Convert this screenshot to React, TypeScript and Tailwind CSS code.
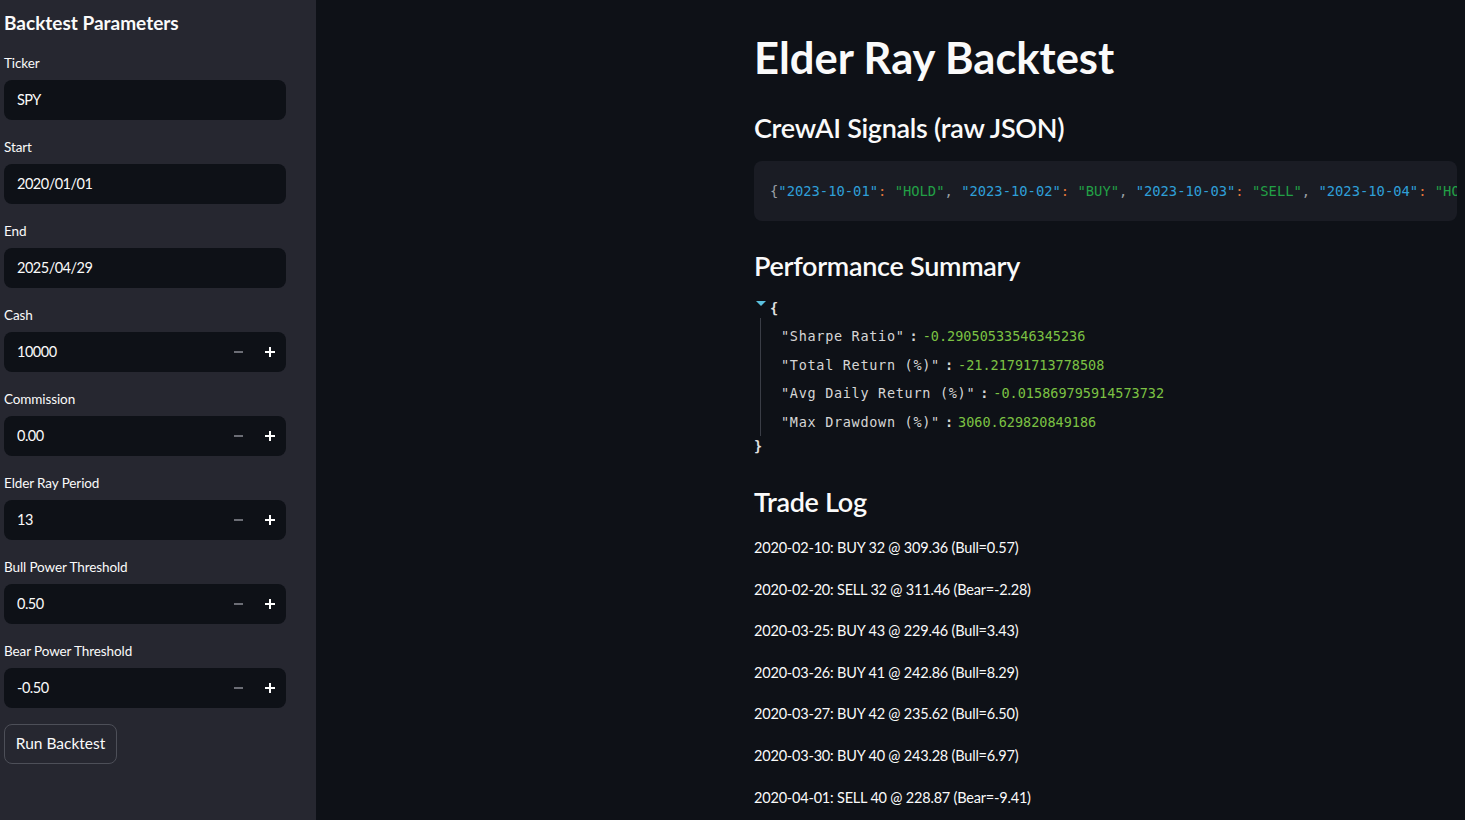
import React from "react";

const sans = { fontFamily: '"Source Sans Pro", Lato, "Noto Sans", sans-serif' };
const mono = { fontFamily: '"DejaVu Sans Mono", "Liberation Mono", monospace' };

function Label({ text }: { text: string }) {
  return <div className="h-[26px] text-[13.5px] leading-[26px] tracking-[-0.1px] text-[#fafafa]">{text}</div>;
}

function TextField({ label, value }: { label: string; value: string }) {
  return (
    <div className="flex flex-col">
      <Label text={label} />
      <div className="mt-[4px] flex h-[40px] items-center rounded-[8px] bg-[#0e1117] px-[13px] text-[14.5px] tracking-[-0.5px] text-[#fafafa]">
        {value}
      </div>
    </div>
  );
}

function NumberField({ label, value }: { label: string; value: string }) {
  return (
    <div className="flex flex-col">
      <Label text={label} />
      <div className="mt-[4px] flex h-[40px] items-center rounded-[8px] bg-[#0e1117] pl-[13px] text-[14.5px] tracking-[-0.5px] text-[#fafafa]">
        <span className="flex-1">{value}</span>
        <span className="flex h-full w-[32px] items-center justify-center">
          <span className="block h-[2px] w-[9px] bg-[#6b6d75]"></span>
        </span>
        <span className="relative flex h-full w-[32px] items-center justify-center">
          <span className="block h-[2px] w-[10px] bg-white"></span>
          <span className="absolute block h-[10px] w-[2px] bg-white"></span>
        </span>
      </div>
    </div>
  );
}

const trades = [
  "2020-02-10: BUY 32 @ 309.36 (Bull=0.57)",
  "2020-02-20: SELL 32 @ 311.46 (Bear=-2.28)",
  "2020-03-25: BUY 43 @ 229.46 (Bull=3.43)",
  "2020-03-26: BUY 41 @ 242.86 (Bull=8.29)",
  "2020-03-27: BUY 42 @ 235.62 (Bull=6.50)",
  "2020-03-30: BUY 40 @ 243.28 (Bull=6.97)",
  "2020-04-01: SELL 40 @ 228.87 (Bear=-9.41)",
];

const perf: [string, string][] = [
  ["Sharpe Ratio", "-0.29050533546345236"],
  ["Total Return (%)", "-21.21791713778508"],
  ["Avg Daily Return (%)", "-0.015869795914573732"],
  ["Max Drawdown (%)", "3060.629820849186"],
];

const signals: [string, string][] = [
  ["2023-10-01", "HOLD"],
  ["2023-10-02", "BUY"],
  ["2023-10-03", "SELL"],
  ["2023-10-04", "HOLD"],
  ["2023-10-05", "BUY"],
];

export default function App() {
  return (
    <div className="flex h-[820px] w-[1465px] overflow-hidden bg-[#0e1117] text-[#fafafa]" style={sans}>
      {/* Sidebar */}
      <aside className="flex h-full w-[316px] shrink-0 flex-col bg-[#262730] pl-[4px] pr-[30px]">
        <h2 className="mt-[9px] text-[19px] font-bold leading-[28px] text-[#fafafa]">Backtest Parameters</h2>
        <div className="mt-[13px] flex flex-col gap-[14px]">
          <TextField label="Ticker" value="SPY" />
          <TextField label="Start" value="2020/01/01" />
          <TextField label="End" value="2025/04/29" />
          <NumberField label="Cash" value="10000" />
          <NumberField label="Commission" value="0.00" />
          <NumberField label="Elder Ray Period" value="13" />
          <NumberField label="Bull Power Threshold" value="0.50" />
          <NumberField label="Bear Power Threshold" value="-0.50" />
        </div>
        <div className="mt-[16px]">
          <button className="h-[40px] w-[113px] rounded-[8px] border border-[#4d4f58] text-[15.5px] text-[#fafafa]">
            Run Backtest
          </button>
        </div>
      </aside>

      {/* Main */}
      <main className="min-w-0 flex-1 pl-[438px] pr-[8px]">
        <h1 className="mt-[30px] text-[43.5px] font-bold leading-[54px]">Elder Ray Backtest</h1>
        <h3 className="mt-[26px] text-[27px] font-semibold leading-[36px] tracking-[-0.3px]">CrewAI Signals (raw JSON)</h3>
        <div className="mt-[15px] flex h-[60px] items-center overflow-hidden rounded-[8px] bg-[#1a1c24] px-[16px]">
          <pre className="whitespace-pre text-[13.8px] text-[#9aa0a6]" style={mono}>
            {"{"}
            {signals.map(([d, s], i) => (
              <React.Fragment key={d}>
                <span className="text-[#2f9fd8]">"{d}"</span>
                <span className="text-[#e2753a]">: </span>
                <span className="text-[#22a046]">"{s}"</span>
                {i < signals.length - 1 ? ", " : ""}
              </React.Fragment>
            ))}
            {"}"}
          </pre>
        </div>

        <h3 className="mt-[27px] text-[27px] font-semibold leading-[36px] tracking-[-0.3px]">Performance Summary</h3>
        <div className="mt-[14px] text-[13.5px]" style={mono}>
          <div className="flex h-[20px] items-center">
            <svg width="12" height="10" viewBox="0 0 12 10" className="ml-[1px] mt-[-8px]">
              <path d="M1 2 L11 2 L6 7 Z" fill="#5bc0de" />
            </svg>
            <span className="ml-[3px] font-bold text-[#e0e0e0]">{"{"}</span>
          </div>
          <div className="ml-[6px] border-l border-[#3a3d46] pl-[20px] pt-[4px]">
            {perf.map(([k, v]) => (
              <div key={k} className="flex h-[28.5px] items-center whitespace-pre">
                <span className="tracking-[0.7px] text-[#d6d6d6]">"{k}"</span>
                <span className="mx-[5px] font-bold text-[#d6d6d6]">:</span>
                <span className="text-[#7cc243]">{v}</span>
              </div>
            ))}
          </div>
          <div className="h-[20px] font-bold leading-[20px] text-[#e0e0e0]">{"}"}</div>
        </div>

        <h3 className="mt-[28px] text-[27px] font-semibold leading-[36px] tracking-[-0.3px]">Trade Log</h3>
        <div className="mt-[16px] flex flex-col gap-[17.6px]">
          {trades.map((t) => (
            <p key={t} className="text-[14.5px] leading-[24px] tracking-[-0.2px]">{t}</p>
          ))}
        </div>
      </main>
    </div>
  );
}
